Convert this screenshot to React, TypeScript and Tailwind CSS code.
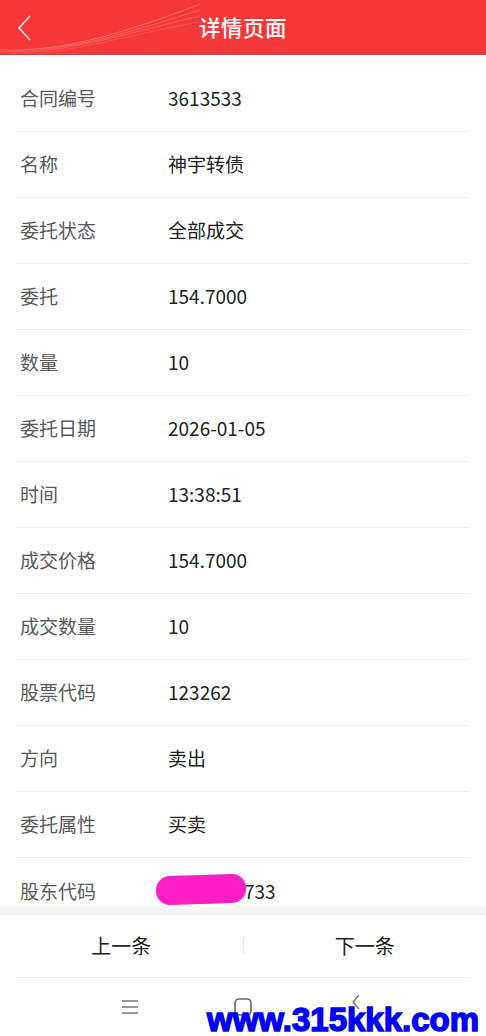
import React from "react";

const ROWS: [string, string][] = [
  ["合同编号", "3613533"],
  ["名称", "神宇转债"],
  ["委托状态", "全部成交"],
  ["委托", "154.7000"],
  ["数量", "10"],
  ["委托日期", "2026-01-05"],
  ["时间", "13:38:51"],
  ["成交价格", "154.7000"],
  ["成交数量", "10"],
  ["股票代码", "123262"],
  ["方向", "卖出"],
  ["委托属性", "买卖"],
];

const FONT = { fontFamily: '"Noto Sans CJK SC", "Noto Sans", sans-serif' };

function Header() {
  return (
    <div className="relative h-[55px] bg-[#f6383b] flex items-center justify-center overflow-hidden border-b border-[#d93a3a]">
      {/* decorative swoosh lines */}
      <svg className="absolute left-0 top-0" width="200" height="55" viewBox="0 0 200 55" fill="none">
        <path d="M0 50 C60 52 120 35 200 4" stroke="#ffffff" strokeOpacity="0.25" strokeWidth="1" />
        <path d="M0 52 C70 52 130 32 200 10" stroke="#ffffff" strokeOpacity="0.2" strokeWidth="1" />
        <path d="M10 54 C80 50 140 30 200 16" stroke="#ffffff" strokeOpacity="0.18" strokeWidth="1" />
        <path d="M30 55 C90 48 150 30 200 22" stroke="#ffffff" strokeOpacity="0.12" strokeWidth="1" />
      </svg>
      <svg className="absolute left-[17px] top-[15px]" width="16" height="26" viewBox="0 0 16 26" fill="none">
        <path d="M13 1 L2 13 L13 25" stroke="#ffffff" strokeOpacity="0.9" strokeWidth="1.6" />
      </svg>
      <span className="text-white text-[21.5px] font-medium tracking-wide">详情页面</span>
    </div>
  );
}

function Row({ label, value }: { label: string; value: React.ReactNode }) {
  return (
    <div className="mx-4 h-[66px] flex items-center border-b border-[#eeeeee]">
      <span className="w-[152px] pl-1 text-[19px] text-[#5a5a5a]">{label}</span>
      <span className="text-[19px] text-[#222222]">{value}</span>
    </div>
  );
}

export default function App() {
  return (
    <div className="relative w-[486px] h-[1036px] bg-white overflow-hidden" style={FONT}>
      <Header />
      <div className="pt-[11px]">
        {ROWS.map(([l, v]) => (
          <Row key={l} label={l} value={v} />
        ))}
        <div className="mx-4 h-[66px] flex items-center">
          <span className="w-[152px] pl-1 text-[19px] text-[#5a5a5a]">股东代码</span>
          <span className="relative text-[19px] text-[#222222] pl-[76px]">
            733
            <span className="absolute left-[-12px] top-[-2px] w-[90px] h-[29px] rounded-[14px] bg-[#ff1dc4] -rotate-2" />
          </span>
        </div>
      </div>

      {/* bottom action bar */}
      <div className="absolute left-0 top-[906px] w-full">
        <div className="h-[9px] bg-gradient-to-b from-[#f7f7f7] to-[#f2f2f2]" />
        <div className="h-[62px] bg-white flex items-center">
          <span className="flex-1 text-center text-[20px] text-[#222222]">上一条</span>
          <span className="w-px h-[16px] bg-[#e2e2e2]" />
          <span className="flex-1 text-center text-[20px] text-[#222222]">下一条</span>
        </div>
        <div className="mx-4 h-px bg-[#eeeeee]" />
        <div className="h-[58px] bg-white flex justify-center items-start gap-[89px] pt-[22px]">
          <div className="w-[24px] flex justify-center">
            <svg width="18" height="14" viewBox="0 0 18 14" fill="none">
              <path d="M1 1 H17 M1 7 H17 M1 13 H17" stroke="#777777" strokeWidth="1.4" />
            </svg>
          </div>
          <div className="w-[24px] flex justify-center">
            <svg width="18" height="18" viewBox="0 0 18 18" fill="none" className="-mt-[2px]">
              <rect x="1" y="1" width="16" height="16" rx="4" stroke="#666666" strokeWidth="1.6" />
            </svg>
          </div>
          <div className="w-[24px] flex justify-center">
            <svg width="10" height="16" viewBox="0 0 10 16" fill="none" className="-mt-[6px]">
              <path d="M8 1 L2 8 L8 15" stroke="#777777" strokeWidth="1.4" />
            </svg>
          </div>
        </div>
      </div>

      {/* watermark */}
      <span
        className="absolute left-[207px] top-[1003px] text-[33px] leading-[33px] font-bold text-[#0000ff] [-webkit-text-stroke:1.5px_#0000ff]"
        style={{ fontFamily: '"Liberation Sans", Arial, sans-serif' }}
      >
        www.315kkk.com
      </span>
    </div>
  );
}
